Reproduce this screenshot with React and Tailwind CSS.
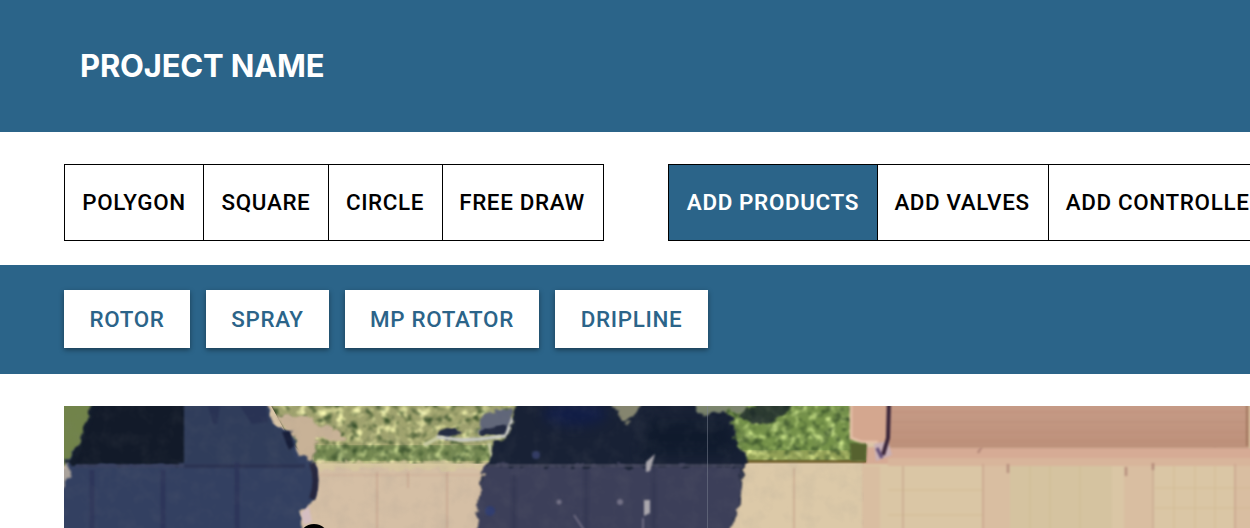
const DRAW_TOOLS = [
  { label: "POLYGON", width: "w-[140px]" },
  { label: "SQUARE", width: "w-[126px]" },
  { label: "CIRCLE", width: "w-[115px] pr-px" },
  { label: "FREE DRAW", width: "w-[162px] pr-[2px]" },
];

const ADD_TOOLS = [
  { label: "ADD PRODUCTS", width: "w-[210px]", active: true },
  { label: "ADD VALVES", width: "w-[172px] pr-[2px]" },
  { label: "ADD CONTROLLER", width: "w-[236px] pr-[2px]" },
];

const PRODUCTS = [
  { label: "ROTOR", width: "w-[126px]" },
  { label: "SPRAY", width: "w-[123px]" },
  { label: "MP ROTATOR", width: "w-[194px]" },
  { label: "DRIPLINE", width: "w-[153px]" },
];

function ToolGroup({ tools }) {
  return (
    <div className="flex h-[77px] shrink-0">
      {tools.map((t) => (
        <button
          key={t.label}
          className={`-mr-px shrink-0 border border-black whitespace-nowrap ${t.width} ${
            t.active ? "bg-[#2b6489] font-semibold text-white" : "bg-white font-medium text-black"
          }`}
        >
          {t.label}
        </button>
      ))}
    </div>
  );
}

function AerialMap() {
  return (
    <svg className="block h-[122px] w-[1186px]" viewBox="64 406 1186 122">
      <defs>
        <filter id="soft" x="-5%" y="-5%" width="110%" height="110%" colorInterpolationFilters="sRGB">
          <feTurbulence type="fractalNoise" baseFrequency="0.12" numOctaves="2" seed="4" />
          <feDisplacementMap in="SourceGraphic" scale="12" xChannelSelector="R" yChannelSelector="G" result="d" />
          <feGaussianBlur in="d" stdDeviation="0.9" />
        </filter>
        <filter id="blur" x="-20%" y="-20%" width="140%" height="140%" colorInterpolationFilters="sRGB">
          <feGaussianBlur stdDeviation="0.9" />
        </filter>
        <filter id="haze" x="-50%" y="-50%" width="200%" height="200%" colorInterpolationFilters="sRGB">
          <feGaussianBlur stdDeviation="6" />
        </filter>
        <filter id="leaves" x="0" y="0" width="100%" height="100%" colorInterpolationFilters="sRGB">
          <feTurbulence type="fractalNoise" baseFrequency="0.11 0.12" numOctaves="3" seed="9" />
          <feColorMatrix values="1.2 0 0 0 -0.6  1.15 0 0 0 -0.575  0.9 0 0 0 -0.45  0 0 0 0 1" result="n" />
          <feComposite in="SourceGraphic" in2="n" operator="arithmetic" k2="1" k3="1" result="c" />
          <feTurbulence type="fractalNoise" baseFrequency="0.12 0.13" numOctaves="2" seed="21" />
          <feColorMatrix values="0 0 0 0 0.2  0 0 0 0 0.3  0 0 0 0 0.15  3 0 0 0 -1.5" result="k" />
          <feMerge result="m">
            <feMergeNode in="c" />
            <feMergeNode in="k" />
          </feMerge>
          <feGaussianBlur in="m" stdDeviation="1" result="b" />
          <feComposite in="b" in2="SourceAlpha" operator="in" />
        </filter>
        <filter id="mottle" x="0" y="0" width="100%" height="100%" colorInterpolationFilters="sRGB">
          <feTurbulence type="fractalNoise" baseFrequency="0.06" numOctaves="3" seed="3" />
          <feColorMatrix values="0 0 0 0 0.5  0 0 0 0 0.5  0 0 0 0 0.5  1.4 0 0 0 -0.6" />
        </filter>
        <linearGradient id="roof" x2="0" y2="1">
          <stop offset="0" stopColor="#c79c88" />
          <stop offset="1" stopColor="#bd907a" />
        </linearGradient>
      </defs>

      {/* pavement */}
      <rect x="64" y="406" width="1186" height="122" fill="#d9c5a7" />
      <rect x="300" y="466" width="190" height="62" fill="#d5bfa5" />
      <rect x="740" y="464" width="125" height="64" fill="#dcc9a8" />
      <g filter="url(#blur)">
        <path d="M862 461H1252V530H862Z" fill="#dac6a5" />
        <path d="M862 466h18v64h-18zM982 466h28v64h-28zM1124 466h28v64h-28zM1234 466h18v64h-18z" fill="#d9bea1" />
        <path d="M1010 466h102v64h-102z" fill="#d5c3a0" />
        <path d="M862 447H1252V464H862Z" fill="#d6ab95" />
        <path d="M888 458H1252V466H888Z" fill="#d8b59b" />
        <path d="M377 472V530M447 472V530M408 472v16M794 468v62M903 466v64M983 464v66M1153 464v66M1235 464v66" stroke="#bd937f" strokeWidth="1.6" opacity=".5" />
        <path d="M320 475H480" stroke="#c99c89" strokeWidth="1.2" opacity=".5" />
        <path d="M1008 464v9M1126 467v9M1153 463v7M982 446l-4 7M1218 442l-4 4" stroke="#9a6e64" strokeWidth="2.5" opacity=".55" />
        <path d="M1174 466v64M1195 466v64M1215 466v64M1155 488h97M1155 508h97M888 490h95M888 515h95M1050 466v64M1080 466v64M1030 466v64" stroke="#c5b080" strokeWidth="1" opacity=".4" />
      </g>

      {/* lawn and hedge */}
      <rect x="60" y="402" width="54" height="64" fill="#71834a" filter="url(#blur)" />
      <g filter="url(#soft)">
        <path d="M60 468L72 462V490L60 492Z" fill="#aaa39c" />
      </g>
      <path d="M268 400H520V464H310L290 440Z" fill="#a0a36e" filter="url(#leaves)" />
      <path d="M314 445H492V461H314Z" fill="#627d45" opacity=".7" filter="url(#leaves)" />
      <g filter="url(#soft)">
        <path d="M276 416H308L316 424 326 427 344 436 343 441 328 439 317 436 314 461H300L294 440 284 428Z" fill="#c8b297" />
        <path d="M316 462H488V469H316Z" fill="#d7c99f" opacity=".8" />
        <path d="M484 413L512 410 510 434H476Z" fill="#606679" />
        <path d="M442 431Q449 427 460 431L458 437H438ZM480 432L506 425 508 435H480Z" fill="#20273f" />
      </g>
      <g filter="url(#blur)">
        <path d="M439 431l8-3 10 3v4h-19zM480 431l24-6 2 9h-26z" fill="#242b42" />
        <path d="M436 437L462 440 480 439 506 436 513 418" fill="none" stroke="#c8c9c4" strokeWidth="3.5" />
        <path d="M424 445L438 438M489 443L493 460" stroke="#c8cba4" strokeWidth="3.5" />
      </g>
      <path d="M690 400H866V462H730Z" fill="#759249" filter="url(#leaves)" />
      <path d="M742 450H850V460H742Z" fill="#a5aa5f" opacity=".6" filter="url(#leaves)" />
      <rect x="744" y="460" width="122" height="3" fill="#75632f" opacity=".75" filter="url(#blur)" />
      <path d="M744 461.5H866" stroke="#75632f" strokeWidth="2" opacity=".6" />

      {/* left tree shadow */}
      <g filter="url(#soft)">
        <path d="M94 394H266L272 424 290 431 298 454 314 461 318 488 313 502 302 510 302 538H56V492L70 475 67 460 82 436Z" fill="#334061" />
        <path d="M94 394H180V465H66L82 436Z" fill="#131c2b" />
      </g>
      <g filter="url(#blur)">
        <path d="M98 404H184V463H76L86 436Z" fill="#121a29" />
        <path d="M184 404H267L271 424 288 433 294 457 299 463H184Z" fill="#303d5b" />
        <path d="M208 406h12l-3 18h-4zM240 406h26l2 16-16 2z" fill="#242d50" opacity=".6" />
        <path d="M282 432L290 431 294 446 289 450Z" fill="#161d38" />
        <path d="M76 466H300" stroke="#3b4260" strokeWidth="3" />
        <path d="M184 466H305" stroke="#28304e" strokeWidth="4" opacity=".7" />
        <path d="M92 470v60M163 470v60M237 462v68" stroke="#282d55" strokeWidth="5" opacity=".5" />
        <path d="M312 463Q319 480 312 499" stroke="#26263e" strokeWidth="6" fill="none" />
      </g>
      <path d="M301 513L309 506 312 522 304 525Z" fill="#d5bec1" filter="url(#blur)" />

      {/* middle tree shadow */}
      <g filter="url(#soft)">
        <path d="M516 396H700L732 416 734 440 745 456 743 475 740 502 728 538H475L481 480 489 459 494 443 510 435Z" fill="#182135" />
        <path d="M486 466H742L741 490 737 508 728 538H475L481 484Z" fill="#3c3f59" />
        <path d="M611 398H646L634 416 624 424 618 414Z" fill="#85856f" />
        <path d="M690 398H752L744 412 718 411 704 417Z" fill="#7d866e" />
        <path d="M742 412L764 400 796 400 788 412 768 424 746 422 736 416Z" fill="#19242b" opacity=".8" />
      </g>
      <ellipse cx="575" cy="414" rx="32" ry="12" fill="#0f1c4c" opacity=".75" filter="url(#haze)" />
      <path d="M650 420H728L736 455H640Z" fill="#0e192b" opacity=".8" filter="url(#haze)" />
      <g filter="url(#blur)">
        <path d="M488 465.5H742" stroke="#4c4e62" strokeWidth="2" />
        <path d="M514 475v55M586 470v60M654 468v62" stroke="#303450" strokeWidth="5" opacity=".5" />
        <path d="M646 462l9-8-5 17-4 1zM644 500h6v13l-6 3z" fill="#aaa7ad" />
        <circle cx="536" cy="455" r="4" fill="#303963" />
        <circle cx="490" cy="511" r="5" fill="#303d70" />
        <circle cx="559" cy="502" r="2.5" fill="#737187" />
        <circle cx="620" cy="502" r="3" fill="#737187" />
        <path d="M574 515l10 15M643 518v12" stroke="#6c6a80" strokeWidth="2" />
      </g>
      <rect x="64" y="406" width="800" height="122" filter="url(#mottle)" opacity=".15" />
      <path d="M707.5 406V528" stroke="#7b8291" strokeWidth="1" opacity=".5" />

      {/* roof and wall */}
      <g filter="url(#blur)">
        <path d="M888 400H1254V448H888Z" fill="url(#roof)" />
        <path d="M890 412H1252M890 422H1252M890 432H1252M890 441H1252" stroke="#b68570" strokeWidth="1.5" opacity=".3" />
        <path d="M850 400H887V440L880 444 852 440Z" fill="#d4a78f" />
        <path d="M851 404V438L862 442H878" stroke="#e5c1a9" strokeWidth="2.5" fill="none" />
        <path d="M850 443L867 444 866 461H851Z" fill="#56622f" />
        <path d="M874 444L888 441 892 455 876 461Z" fill="#c9b0b6" />
        <path d="M889 400L888 438 883 455" stroke="#382338" strokeWidth="4" fill="none" />
        <path d="M877 448L882 458" stroke="#655078" strokeWidth="3.5" />
        <path d="M1247 402V446" stroke="#976f55" strokeWidth="1.5" />
        <path d="M1250 402V448" stroke="#d9c49f" strokeWidth="2" />
      </g>
      <circle cx="314" cy="539.5" r="15.5" fill="#000" />
    </svg>
  );
}

export default function App() {
  return (
    <div className="flex h-[528px] w-[1250px] flex-col overflow-hidden bg-white font-['Roboto',sans-serif] text-[22.4px] tracking-[0.64px]">
      <header className="flex h-[132px] shrink-0 items-center bg-[#2b6489] pt-px pl-20">
        <h1 className="font-['Inter',sans-serif] text-[31px] font-[650] tracking-[-0.2px] text-white">PROJECT NAME</h1>
      </header>
      <nav className="flex h-[133px] shrink-0 gap-[65px] pt-8 pl-16">
        <ToolGroup tools={DRAW_TOOLS} />
        <ToolGroup tools={ADD_TOOLS} />
      </nav>
      <section className="flex h-[109px] shrink-0 gap-4 bg-[#2b6489] pt-[25px] pl-16">
        {PRODUCTS.map((p) => (
          <button
            key={p.label}
            className={`h-[58px] shrink-0 bg-white pt-[2px] font-medium whitespace-nowrap text-[#2b6489] shadow-[0_2px_5px_rgba(0,0,0,0.4)] ${p.width}`}
          >
            {p.label}
          </button>
        ))}
      </section>
      <main className="shrink-0 pt-8 pl-16">
        <AerialMap />
      </main>
    </div>
  );
}
